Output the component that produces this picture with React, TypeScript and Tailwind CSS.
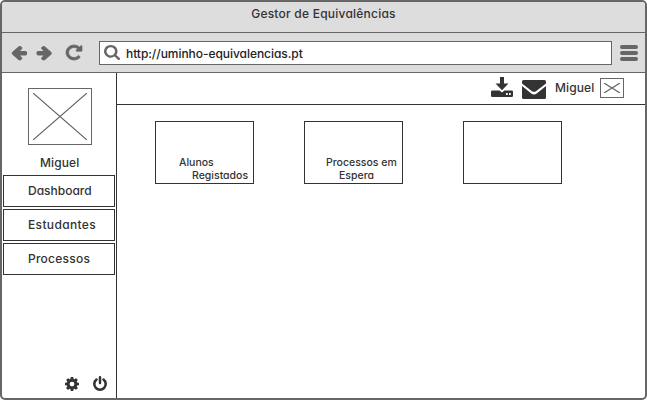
import React from "react";

const paths = {
  arrow:
    "M1664 896v128q0 53-32.5 90.5t-84.5 37.5h-704l293 294q38 36 38 90t-38 90l-75 76q-37 37-90 37-52 0-91-37l-651-652q-37-37-37-90 0-52 37-91l651-650q38-38 91-38 52 0 90 38l75 74q38 38 38 91t-38 91l-293 293h704q52 0 84.5 37.5t32.5 90.5z",
  reload:
    "M1664 256v448q0 26-19 45t-45 19h-448q-42 0-59-40-17-39 14-69l138-138q-148-137-349-137-104 0-198.5 40.5t-163.5 109.5-109.5 163.5-40.5 198.5 40.5 198.5 109.5 163.5 163.5 109.5 198.5 40.5q119 0 225-52t179-147q7-10 23-12 15 0 25 9l137 138q9 8 9.5 20.5t-7.5 22.5q-109 132-264 204.5t-327 72.5q-156 0-298-61t-245-164-164-245-61-298 61-298 164-245 245-164 298-61q147 0 284.5 55.5t244.5 156.5l130-129q29-31 70-14 39 17 39 59z",
  search:
    "M1216 832q0-185-131.5-316.5t-316.5-131.5-316.5 131.5-131.5 316.5 131.5 316.5 316.5 131.5 316.5-131.5 131.5-316.5zm512 832q0 52-38 90t-90 38q-54 0-90-38l-343-342q-179 124-399 124-143 0-273.5-55.5t-225-150-150-225-55.5-273.5 55.5-273.5 150-225 225-150 273.5-55.5 273.5 55.5 225 150 150 225 55.5 273.5q0 220-124 399l343 343q37 37 37 90z",
  cog: "M1152 896q0-106-75-181t-181-75-181 75-75 181 75 181 181 75 181-75 75-181zm512-109v222q0 12-8 23t-20 13l-185 28q-19 54-39 91 35 50 107 138 10 12 10 25t-9 23q-27 37-99 108t-94 71q-12 0-26-9l-138-108q-44 23-91 38-16 136-29 186-7 28-36 28h-222q-14 0-24.5-8.5t-11.5-21.5l-28-184q-49-16-90-37l-141 107q-10 9-25 9-14 0-25-11-126-114-165-168-7-10-7-23 0-12 8-23 15-21 51-66.5t54-70.5q-27-50-41-99l-183-27q-13-2-21-12.5t-8-23.5v-222q0-12 8-23t19-13l186-28q14-46 39-92-40-57-107-138-10-12-10-24 0-10 9-23 26-36 98.5-107.5t94.5-71.5q13 0 26 10l138 107q44-23 91-38 16-136 29-186 7-28 36-28h222q14 0 24.5 8.5t11.5 21.5l28 184q49 16 90 37l142-107q9-9 24-9 13 0 25 10 129 119 165 170 7 8 7 22 0 12-8 23-15 21-51 66.5t-54 70.5q26 50 41 98l183 28q13 2 21 12.5t8 23.5z",
};

function Icon({ d, box, className, stroke = 0 }: { d: string; box: string; className: string; stroke?: number }) {
  return (
    <svg viewBox={box} preserveAspectRatio="none" className={`overflow-visible ${className}`} fill="currentColor" stroke="currentColor" strokeWidth={stroke}>
      <path d={d} />
    </svg>
  );
}

function Placeholder({ className }: { className: string }) {
  return (
    <div className={`flex border border-[#666] bg-white ${className}`}>
      <svg viewBox="0 0 54 46" preserveAspectRatio="none" className="h-full w-full" stroke="#666" fill="none">
        <path d="M0 0L54 46M54 0L0 46" vectorEffect="non-scaling-stroke" strokeWidth="1.2" />
      </svg>
    </div>
  );
}

function MenuItem({ label, className }: { label: string; className: string }) {
  return (
    <button className="flex h-8 w-28 items-center border border-[#333] bg-white pb-px pl-6 text-left">
      <span className={`whitespace-nowrap leading-4 ${className}`}>{label}</span>
    </button>
  );
}

export default function App() {
  return (
    <div className="flex h-[400px] w-[647px] flex-col overflow-hidden rounded-[5px] border-2 border-[#666] bg-white font-['Inter','Open_Sans',sans-serif] text-[12px] font-medium text-[#333] [font-feature-settings:'cv11','ss03']">
      <header className="flex h-[31px] shrink-0 justify-center border-b border-[#666] bg-[#ddd] pt-1">
        <span className="leading-4 tracking-[0.23px]">Gestor de Equivalências</span>
      </header>
      <div className="flex h-10 shrink-0 items-start border-b border-[#666] bg-[#ddd] pl-[9px] pt-2 text-[#666]">
        <Icon d={paths.arrow} box="64 132 1600 1712" stroke={110} className="mt-[5px] h-[15px] w-[15.5px]" />
        <Icon d={paths.arrow} box="64 132 1600 1712" stroke={110} className="ml-[10px] mt-[5px] h-[15px] w-[15.5px] -scale-x-100" />
        <Icon d={paths.reload} box="128 128 1536 1536" stroke={70} className="ml-[14px] mt-1 h-[15px] w-4" />
        <div className="ml-[17px] flex h-6 w-[513px] border border-[#666] bg-white pl-1 pt-[3px]">
          <Icon d={paths.search} box="64 128 1664 1664" className="h-[15px] w-4" />
          <span className="ml-[6px] mt-px leading-4 tracking-[-0.05px] text-[#222]">http://uminho-equivalencias.pt</span>
        </div>
        <div className="ml-2 mt-1 flex flex-col gap-0.5">
          <i className="h-1 w-[18px] rounded-full bg-[#666]" />
          <i className="h-1 w-[18px] rounded-full bg-[#666]" />
          <i className="h-1 w-[18px] rounded-full bg-[#666]" />
        </div>
      </div>
      <div className="flex min-h-0 flex-1">
        <aside className="flex w-[115px] shrink-0 flex-col border-r border-[#333]">
          <Placeholder className="ml-[26px] mt-[15px] h-[57px] w-16 p-1" />
          <span className="ml-[38px] mt-[10px] leading-4 tracking-[0.1px]">Miguel</span>
          <nav className="ml-px mt-1 flex flex-col gap-0.5">
            <MenuItem label="Dashboard" className="tracking-[0px]" />
            <MenuItem label="Estudantes" className="tracking-[0.35px]" />
            <MenuItem label="Processos" className="tracking-[0.25px]" />
          </nav>
          <div className="mb-[7px] ml-[63px] mt-auto flex items-end">
            <Icon d={paths.cog} box="128 128 1536 1536" className="h-[14px] w-[14px]" />
            <svg viewBox="0 0 14 15" className="ml-[14px] h-[15px] w-[14px]" fill="none" stroke="currentColor" strokeWidth="2.5" strokeLinecap="round">
              <path d="M3.500 3.500A5.700 5.700 0 1 0 10.500 3.500M7 1.300V7" />
            </svg>
          </div>
        </aside>
        <main className="flex flex-1 flex-col">
          <div className="flex h-8 shrink-0 items-start border-b border-[#333] pl-[374px]">
            <svg viewBox="0 0 22 20" className="mt-1 h-5 w-[22px]" fill="currentColor">
              <path d="M9 0h4v6.500h4.500L11 13.300 4.500 6.500H9z" />
              <path
                fillRule="evenodd"
                d="M1.200 13.500H8.500L11 15.600l2.500-2.100H20.800Q22 13.500 22 14.700v4.100Q22 20 20.800 20H1.200Q0 20 0 18.800v-4.100Q0 13.500 1.200 13.500zM15 16v2h1.700v-2zM18 16v2h1.700v-2z"
              />
            </svg>
            <svg viewBox="0 0 24 19" className="ml-[9px] mt-[7px] h-[19px] w-6" fill="currentColor">
              <path d="M1.500 0h21Q24 0 24 1.500V3.600L14 11.200Q12 12.400 10 11.200L0 3.600V1.500Q0 0 1.500 0z" />
              <path d="M0 6l9.300 7.400Q12 15.400 14.700 13.400L24 6V17.500Q24 19 22.500 19h-21Q0 19 0 17.500z" />
            </svg>
            <span className="ml-[9px] mt-[7px] w-[45px] leading-4 tracking-[0.1px]">Miguel</span>
            <Placeholder className="mt-[5px] h-5 w-6 px-[3px] py-1" />
          </div>
          <section className="flex pl-[38px] pt-4 text-[10.5px] leading-[13px]">
            <div className="flex h-[63px] w-[99px] flex-col border border-[#333] pt-[34px]">
              <span className="pl-[23px]">Alunos</span>
              <span className="whitespace-nowrap pl-9">Registados</span>
            </div>
            <div className="ml-[50px] flex h-[63px] w-[99px] flex-col border border-[#333] pt-[34px]">
              <span className="whitespace-nowrap pl-[21px]">Processos em</span>
              <span className="pl-[34px]">Espera</span>
            </div>
            <div className="ml-[60px] h-[63px] w-[99px] border border-[#333]" />
          </section>
        </main>
      </div>
    </div>
  );
}
